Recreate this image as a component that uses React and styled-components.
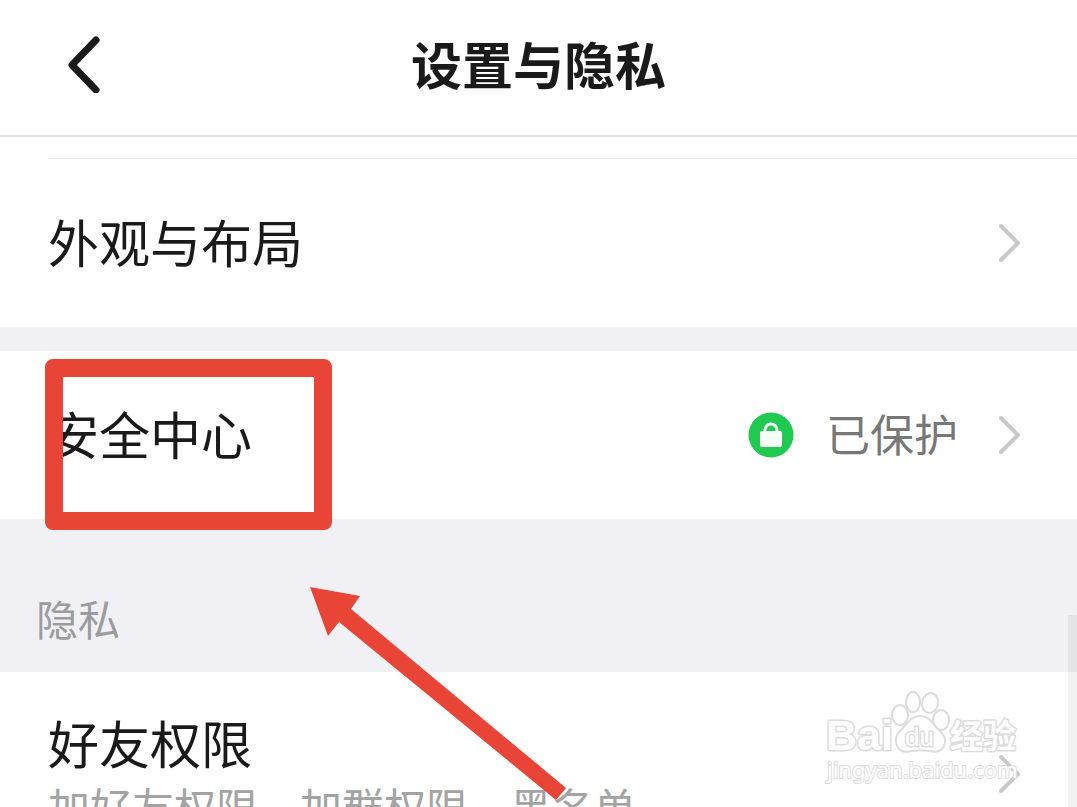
import React from 'react';
import styled, { createGlobalStyle } from 'styled-components';

const GlobalStyle = createGlobalStyle`
  * {
    box-sizing: border-box;
  }

  body {
    margin: 0;
    background: #ffffff;
    color: #1a1a1a;
    font-family: "Noto Sans CJK SC", "Noto Sans", sans-serif;
  }

  button {
    border: 0;
    padding: 0;
    background: none;
    color: inherit;
    font: inherit;
    text-align: left;
    cursor: pointer;
  }
`;

const Screen = styled.div`
  position: relative;
  height: 100vh;
  overflow: hidden;
`;

const Header = styled.header`
  display: grid;
  grid-template-columns: 1fr auto 1fr;
  align-items: center;
  padding: 27px 60px 36px;
  border-bottom: 2px solid #e3e3e3;
`;

const BackButton = styled.button`
  display: flex;
  justify-self: start;
`;

const Title = styled.h1`
  margin: 0;
  font-size: 51px;
  line-height: 72px;
  font-weight: 700;
`;

const Divider = styled.hr`
  margin: 21px 0 0 48px;
  border: 0;
  height: 1px;
  background: #e3e3e3;
`;

const Group = styled.section`
  position: relative;
  border-bottom: ${({ $gap }) => ($gap ? '24px solid #f1f1f5' : '0')};
`;

const Row = styled.button`
  display: flex;
  align-items: center;
  width: 100%;
  padding: ${({ $tall }) => ($tall ? '40px' : '52px')} 54px
    ${({ $tall }) => ($tall ? '40px' : '52px')} 48px;
`;

const RowText = styled.span`
  display: flex;
  flex: 1;
  flex-direction: column;
  gap: 4px;
  padding-bottom: ${({ $single }) => ($single ? '4px' : '0')};
`;

const Label = styled.span`
  font-size: 51px;
  line-height: 60px;
`;

const Detail = styled.span`
  color: #a3a3a3;
  font-size: 42px;
  line-height: 60px;
  white-space: nowrap;
`;

const Status = styled.span`
  display: flex;
  align-items: center;
  gap: 32px;
  margin-right: 41px;
  color: #777777;
  font-size: 44px;
  line-height: 60px;
`;

const StatusText = styled.span`
  padding-bottom: 4px;
`;

const SectionTitle = styled.h2`
  margin: 0;
  padding: 69px 36px 24px;
  background: #f1f1f5;
  color: #9c9ca0;
  font-size: 42px;
  line-height: 60px;
  font-weight: 400;
`;

const Frame = styled.div`
  position: absolute;
  top: 8px;
  left: 45px;
  z-index: 1;
  width: 287px;
  height: 171px;
  border: 18px solid #e84537;
  border-radius: 8px;
  pointer-events: none;
`;

const Arrow = styled.svg`
  position: absolute;
  top: 587px;
  left: 310px;
  pointer-events: none;
`;

const Watermark = styled.svg`
  position: absolute;
  right: 53px;
  bottom: 17px;
  pointer-events: none;
`;

const ScrollThumb = styled.div`
  position: absolute;
  top: 615px;
  right: 0;
  bottom: 0;
  width: 9px;
  background: rgba(0, 0, 0, 0.05);
`;

function Chevron() {
  return (
    <svg width="24" height="42" viewBox="0 0 24 42" fill="none" aria-hidden="true">
      <path d="M2 4 L19 21 L2 38" stroke="#c8c8c8" strokeWidth="4" strokeLinecap="round" strokeLinejoin="round" />
    </svg>
  );
}

function LockBadge() {
  return (
    <svg width="46" height="46" viewBox="0 0 46 46" aria-hidden="true">
      <circle cx="23" cy="23" r="22.5" fill="#20ca50" />
      <path d="M17 20 V18 A6 6 0 0 1 29 18 V20" fill="none" stroke="#f4fff6" strokeWidth="3" />
      <rect x="12" y="19" width="22" height="16" rx="2" fill="#f4fff6" />
    </svg>
  );
}

function BaiduMark() {
  return (
    <Watermark width="202" height="104" viewBox="0 0 202 104" role="img" aria-label="Baidu 经验">
      <g fill="#ffffff" fillOpacity="0.7" stroke="#dcdcdc" strokeWidth="2">
        <ellipse cx="78" cy="29" rx="8" ry="10" />
        <ellipse cx="91" cy="16" rx="7" ry="10" />
        <ellipse cx="108" cy="17" rx="8" ry="10" transform="rotate(12 108 17)" />
        <ellipse cx="119" cy="34" rx="8" ry="10" />
        <path d="M98 30 C89 30 86 37 81 42 C76 47 73 50 74 56 C75 65 82 67 90 65 C96 64 101 64 107 65 C115 67 122 65 123 56 C124 50 120 46 115 42 C110 37 107 30 98 30 Z" />
      </g>
      <g
        fill="#ffffff"
        stroke="#dcdcdc"
        strokeWidth="3"
        strokeLinejoin="round"
        paintOrder="stroke"
        fontFamily="'Liberation Sans', 'Noto Sans CJK SC', sans-serif"
      >
        <text x="4" y="64" fontSize="43" fontWeight="700">Bai</text>
        <text x="83" y="60" fontSize="26">du</text>
        <text x="128" y="62" fontSize="33" fontWeight="700">经验</text>
        <text x="5" y="92" fontSize="22" strokeWidth="2" fontFamily="'Noto Sans', sans-serif">jingyan.baidu.com</text>
      </g>
    </Watermark>
  );
}

function App() {
  return (
    <>
      <GlobalStyle />
      <Screen>
        <Header>
          <BackButton aria-label="返回">
            <svg width="48" height="60" viewBox="0 0 48 60" fill="none" aria-hidden="true">
              <path d="M36 7 L12 32 L36 57" stroke="#1a1a1a" strokeWidth="7" strokeLinecap="round" strokeLinejoin="round" />
            </svg>
          </BackButton>
          <Title>设置与隐私</Title>
        </Header>

        <main>
          <Divider />
          <Group $gap>
            <Row>
              <RowText $single>
                <Label>外观与布局</Label>
              </RowText>
              <Chevron />
            </Row>
          </Group>

          <Group>
            <Row>
              <RowText $single>
                <Label>安全中心</Label>
              </RowText>
              <Status>
                <LockBadge />
                <StatusText>已保护</StatusText>
              </Status>
              <Chevron />
            </Row>
            <Frame />
          </Group>

          <SectionTitle>隐私</SectionTitle>
          <Group>
            <Row $tall>
              <RowText>
                <Label>好友权限</Label>
                <Detail>加好友权限、加群权限、黑名单</Detail>
              </RowText>
              <Chevron />
            </Row>
          </Group>
        </main>

        <Arrow width="256" height="214" viewBox="0 0 256 214" aria-hidden="true">
          <path d="M0 0 L50 9 L41 22 L256 201 L246 213 L29 35 L18 49 Z" fill="#e84537" />
        </Arrow>
        <BaiduMark />
        <ScrollThumb />
      </Screen>
    </>
  );
}

export default App;
